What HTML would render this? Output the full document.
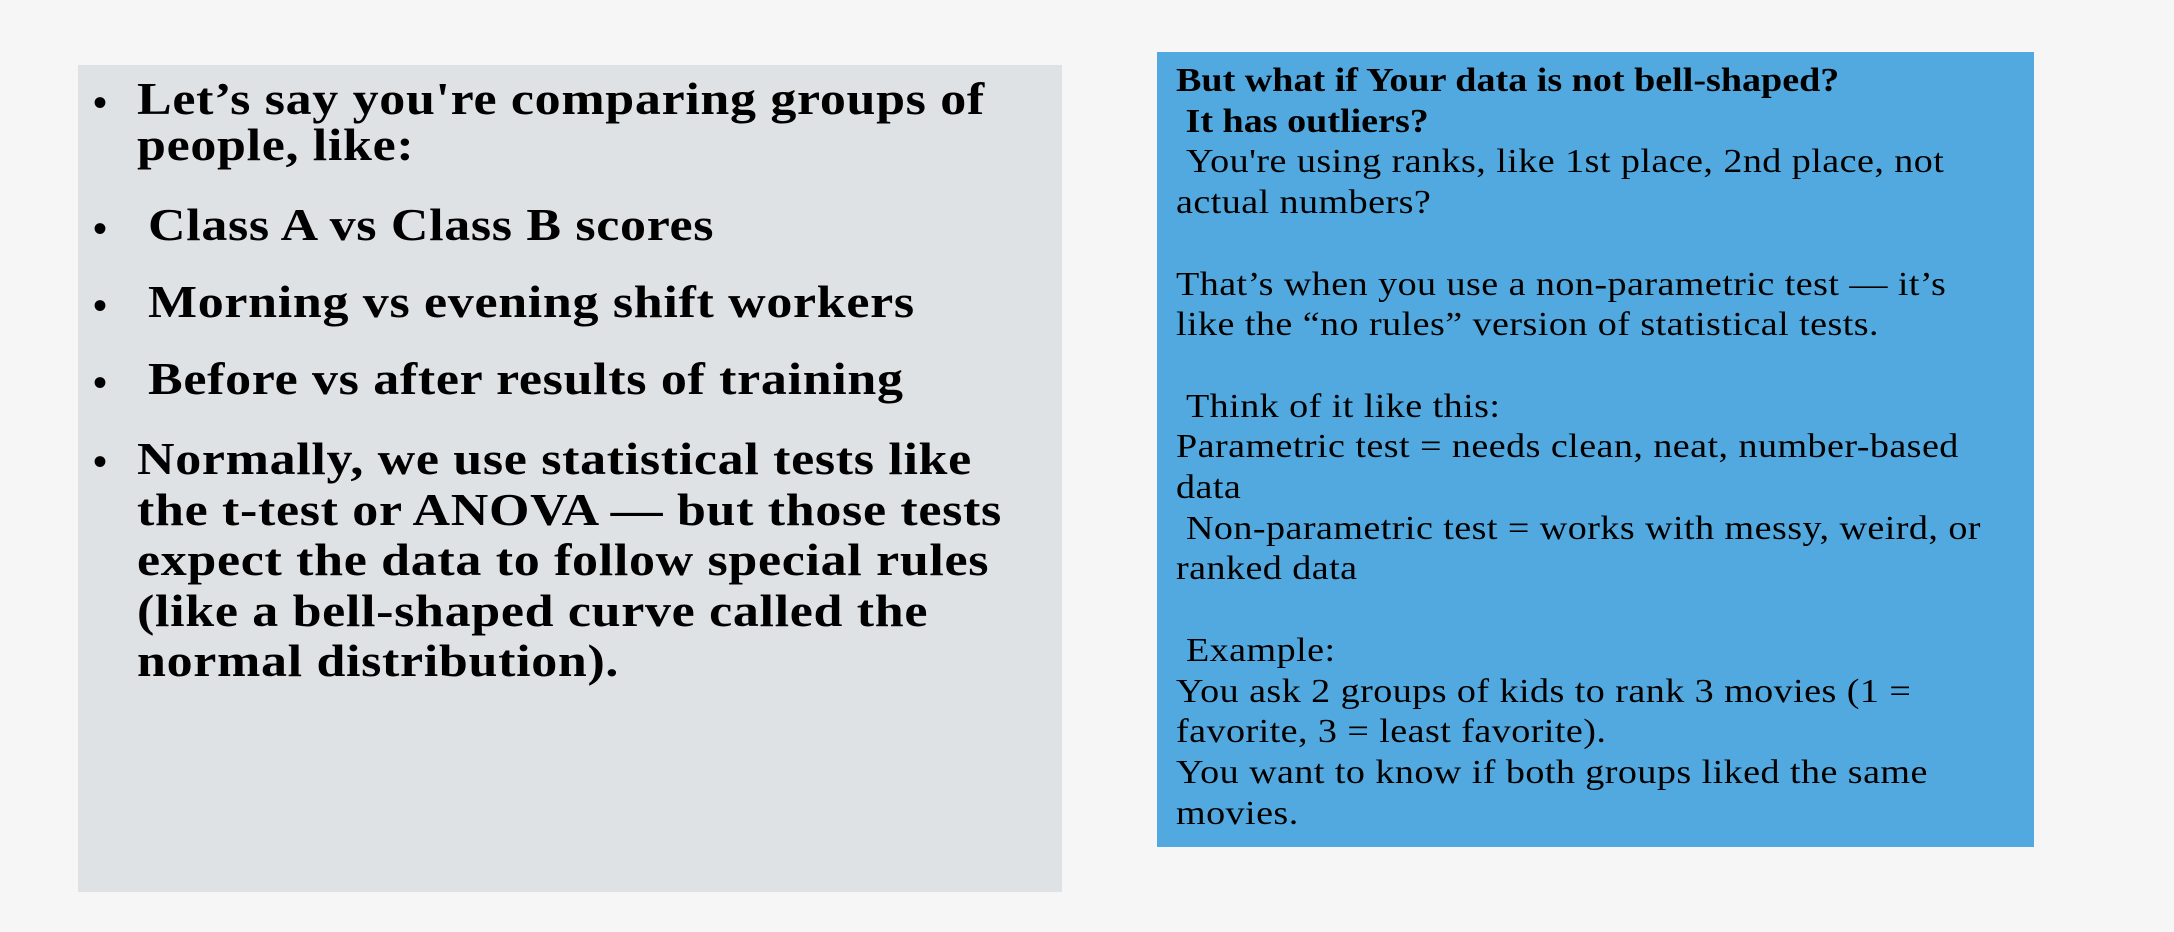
<!DOCTYPE html>
<html><head><style>
html,body{margin:0;padding:0;width:2174px;height:932px;background:#f6f6f6;overflow:hidden}
.l{position:absolute;left:78px;top:65px;width:984px;height:827px;background:#dfe2e5}
.r{position:absolute;left:1157px;top:52px;width:877px;height:795px;background:#52a9df}
.t{position:absolute;font-family:"Liberation Serif",serif;color:#000;white-space:nowrap;transform-origin:0 0}
.lt{font-weight:bold;font-size:46px;line-height:46px;letter-spacing:0.6px;transform:scaleX(1.13)}
.b{position:absolute;left:93px;font-size:40px;transform:none}
.rt{left:1176px;top:61px;font-size:34px;line-height:40.7px;letter-spacing:0.4px;transform:scaleX(1.12)}
.rt b{letter-spacing:0}
</style></head><body>
<div class="l"></div>
<div class="r"></div>
<div class="t lt" style="left:137px;top:76px">Let’s say you're comparing groups of<br>people, like:</div>
<div class="t lt" style="left:148px;top:202px">Class A vs Class B scores</div>
<div class="t lt" style="left:148px;top:279px">Morning vs evening shift workers</div>
<div class="t lt" style="left:148px;top:356px">Before vs after results of training</div>
<div class="t lt" style="left:137px;top:434px;line-height:50.5px">Normally, we use statistical tests like<br>the t-test or ANOVA — but those tests<br>expect the data to follow special rules<br>(like a bell-shaped curve called the<br>normal distribution).</div>
<div class="t lt b" style="top:80px">•</div>
<div class="t lt b" style="top:206px">•</div>
<div class="t lt b" style="top:283px">•</div>
<div class="t lt b" style="top:360px">•</div>
<div class="t lt b" style="top:439px">•</div>
<div class="t rt"><b>But what if Your data is not bell-shaped?<br>&nbsp;It has outliers?</b><br>&nbsp;You're using ranks, like 1st place, 2nd place, not<br>actual numbers?<br><br>That’s when you use a non-parametric test — it’s<br>like the “no rules” version of statistical tests.<br><br>&nbsp;Think of it like this:<br>Parametric test = needs clean, neat, number-based<br>data<br>&nbsp;Non-parametric test = works with messy, weird, or<br>ranked data<br><br>&nbsp;Example:<br>You ask 2 groups of kids to rank 3 movies (1 =<br>favorite, 3 = least favorite).<br>You want to know if both groups liked the same<br>movies.</div>
</body></html>
